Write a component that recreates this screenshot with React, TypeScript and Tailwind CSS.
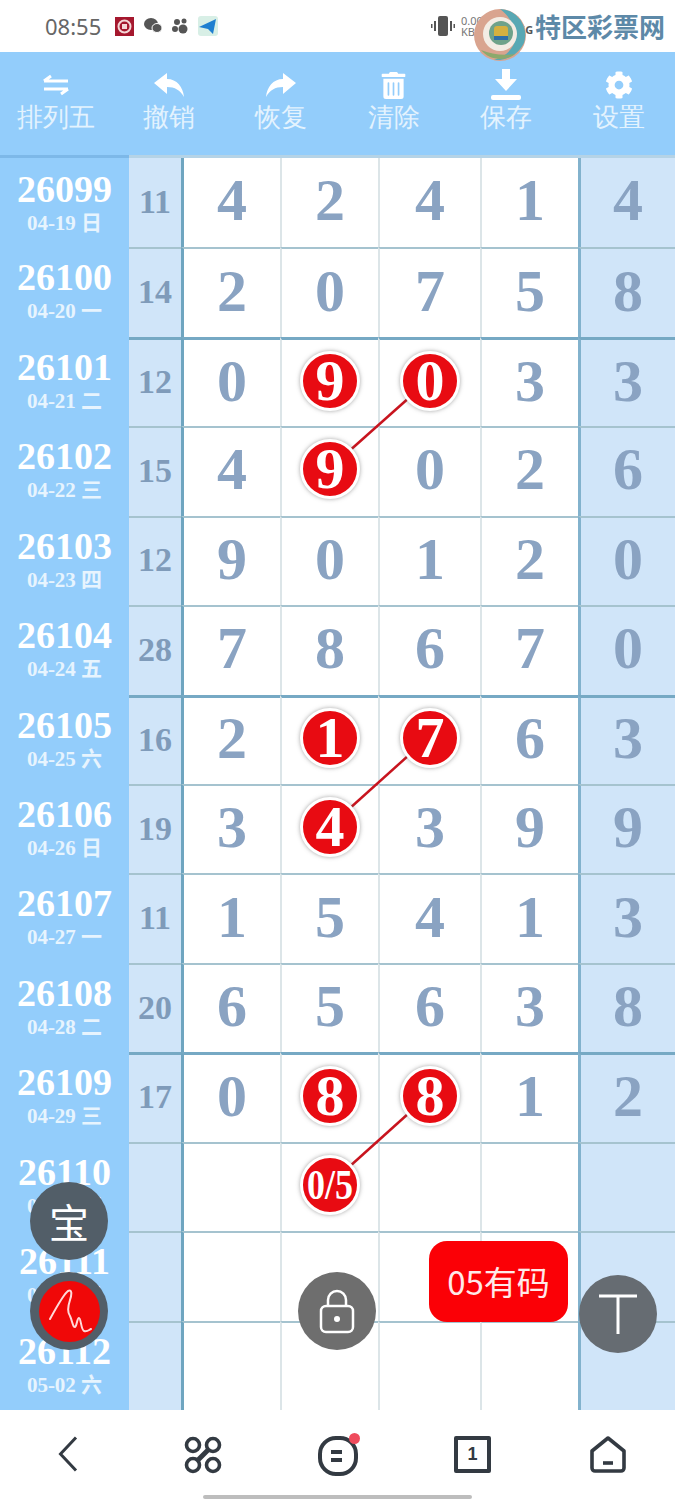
import { FaCog, FaTrashAlt } from 'react-icons/fa'

const serif = { fontFamily: '"Liberation Serif", "Noto Sans CJK SC", serif' }

type Row = { issue: string; date: string; sum: string; nums: string[]; hits?: number[] }

const rows: Row[] = [
  { issue: '26099', date: '04-19 日', sum: '11', nums: ['4', '2', '4', '1', '4'] },
  { issue: '26100', date: '04-20 一', sum: '14', nums: ['2', '0', '7', '5', '8'] },
  { issue: '26101', date: '04-21 二', sum: '12', nums: ['0', '9', '0', '3', '3'], hits: [1, 2] },
  { issue: '26102', date: '04-22 三', sum: '15', nums: ['4', '9', '0', '2', '6'], hits: [1] },
  { issue: '26103', date: '04-23 四', sum: '12', nums: ['9', '0', '1', '2', '0'] },
  { issue: '26104', date: '04-24 五', sum: '28', nums: ['7', '8', '6', '7', '0'] },
  { issue: '26105', date: '04-25 六', sum: '16', nums: ['2', '1', '7', '6', '3'], hits: [1, 2] },
  { issue: '26106', date: '04-26 日', sum: '19', nums: ['3', '4', '3', '9', '9'], hits: [1] },
  { issue: '26107', date: '04-27 一', sum: '11', nums: ['1', '5', '4', '1', '3'] },
  { issue: '26108', date: '04-28 二', sum: '20', nums: ['6', '5', '6', '3', '8'] },
  { issue: '26109', date: '04-29 三', sum: '17', nums: ['0', '8', '8', '1', '2'], hits: [1, 2] },
  { issue: '26110', date: '04-30 四', sum: '', nums: ['', '0/5', '', '', ''], hits: [1] },
  { issue: '26111', date: '05-01 五', sum: '', nums: ['', '', '', '', ''] },
  { issue: '26112', date: '05-02 六', sum: '', nums: ['', '', '', '', ''] },
]

const thickRows = [2, 6, 10]

function SwapIcon() {
  return (
    <svg width="26" height="22" viewBox="0 0 26 22" fill="none" stroke="white" strokeWidth="3">
      <path d="M1 7h24M1 7l7-5" />
      <path d="M25 15H1M25 15l-7 5" />
    </svg>
  )
}

function UndoIcon() {
  return (
    <svg width="30" height="24" viewBox="0 0 30 24" fill="white">
      <path d="M0 10 13 0v6c10 0 16 8 17 18-4-7-9-10-17-10v7z" />
    </svg>
  )
}

function RedoIcon() {
  return (
    <svg width="30" height="24" viewBox="0 0 30 24" fill="white">
      <path d="M30 10 17 0v6C7 6 1 14 0 24c4-7 9-10 17-10v7z" />
    </svg>
  )
}

function SaveIcon() {
  return (
    <svg width="32" height="32" viewBox="0 0 32 32" fill="white">
      <path d="M12 0h8v10h7L16 22 5 10h7z" />
      <rect x="1" y="26" width="30" height="5" rx="2" />
    </svg>
  )
}

function ToolItem({ icon, label }: { icon: React.ReactNode; label: string }) {
  return (
    <div className="flex flex-col items-center">
      <div className="flex h-[34px] items-center justify-center">{icon}</div>
      <span className="text-[26px] leading-[28px] text-[#e4f3fe]">{label}</span>
    </div>
  )
}

function HitBall({ value }: { value: string }) {
  const small = value.length > 1
  return (
    <div
      className="relative z-10 flex h-[60px] w-[60px] items-center justify-center rounded-full border-[3px] border-white bg-[#e80b12] text-[58px] leading-none font-bold text-white shadow-[0_0_4px_rgba(90,90,90,0.55)]"
      style={serif}
    >
      {small ? <span className="inline-block scale-y-[1.2] text-[36px]">{value}</span> : value}
    </div>
  )
}

function TableRow({ row, index }: { row: Row; index: number }) {
  const thick = thickRows.includes(index)
  const topLine = thick
    ? 'border-t-[3px] border-t-[#76a9c4]'
    : index === 0
      ? ''
      : 'border-t-2 border-t-[#a5c3cf]'

  return (
    <div className="grid min-h-0 grid-cols-[129px_52px_99px_98px_102px_98px_97px]">
      <div
        className={`flex flex-col items-center bg-[#93cdfb] text-white ${
          index === 0 ? '-mt-[3px] border-t-[3px] border-t-[#7db8e8] pt-[11px]' : 'pt-[10px]'
        }`}
        style={serif}
      >
        <span className="text-[38px] leading-[40px] font-bold">{row.issue}</span>
        <span className="text-[21px] leading-[29px] font-bold text-[#e7f4fe]">{row.date}</span>
      </div>
      <div
        className={`flex items-center justify-center bg-[#d0e5f9] pb-[2px] text-[34px] leading-none font-bold text-[#7f9bba] ${topLine}`}
        style={serif}
      >
        {row.sum}
      </div>
      {row.nums.map((num, i) => {
        const hit = row.hits?.includes(i)
        const last = i === 4
        return (
          <div
            key={i}
            className={`flex items-center justify-center pb-[5px] text-[60px] leading-none font-bold text-[#8aa3c2] ${topLine} ${
              last ? 'border-l-[3px] border-l-[#82b2cd] bg-[#d0e5f9]' : 'bg-white'
            } ${i === 0 ? 'border-l-[3px] border-l-[#6fa5c0]' : ''} ${
              i > 0 && !last ? 'border-l-2 border-l-[#dce5e8]' : ''
            }`}
            style={serif}
          >
            {hit ? <HitBall value={num} /> : num}
          </div>
        )
      })}
    </div>
  )
}

function Logo() {
  return (
    <svg width="54" height="54" viewBox="0 0 54 54">
      <circle cx="27" cy="27" r="26" fill="#d9a48f" />
      <path d="M27 1a26 26 0 0 1 24 34c-6 12-18 18-30 17C34 48 44 38 42 26 40 14 34 6 27 1z" fill="#58a8b4" />
      <path d="M8 42c8 10 24 12 34 4-12 2-24 0-34-4z" fill="#8ca96c" />
      <circle cx="27" cy="26" r="17" fill="#f3ece4" />
      <circle cx="28" cy="25" r="12" fill="#6fa28a" />
      <rect x="21" y="18" width="14" height="14" rx="3" fill="#d5b040" />
      <path d="M21 28h14v4H21z" fill="#2f6fa8" />
    </svg>
  )
}

function StatusBar() {
  return (
    <div className="relative flex h-[52px] items-center bg-white pl-[45px] pr-[10px]">
      <span className="text-[22px] text-[#666]">08:55</span>
      <div className="ml-[14px] flex items-center gap-[10px]">
        <svg width="19" height="19" viewBox="0 0 19 19">
          <rect width="19" height="19" fill="#a5182e" />
          <circle cx="9.5" cy="9.5" r="6" fill="none" stroke="#f4d6d6" strokeWidth="2" />
          <rect x="7" y="7" width="5" height="5" fill="#f4d6d6" />
        </svg>
        <svg width="18" height="16" viewBox="0 0 18 16" fill="#555">
          <ellipse cx="7" cy="6" rx="7" ry="6" />
          <ellipse cx="13" cy="10" rx="5" ry="4.5" stroke="white" />
        </svg>
        <svg width="16" height="16" viewBox="0 0 16 16" fill="#555">
          <circle cx="5" cy="4" r="3" />
          <circle cx="12" cy="3" r="2.5" />
          <circle cx="3" cy="11" r="3" />
          <circle cx="11" cy="11" r="4.5" />
        </svg>
        <svg width="20" height="20" viewBox="0 0 20 20">
          <rect width="20" height="20" fill="#d8efe6" rx="3" />
          <path d="M1 11 18 3l-3 15-5-5z" fill="#1f7fd0" />
        </svg>
      </div>
      <div className="ml-auto flex items-center">
        <svg width="24" height="22" viewBox="0 0 24 22" fill="#555">
          <rect x="7" y="1" width="10" height="20" rx="2" />
          <rect x="3" y="6" width="2" height="10" />
          <rect x="19" y="6" width="2" height="10" />
          <rect x="0" y="9" width="1.5" height="4" />
          <rect x="22.5" y="9" width="1.5" height="4" />
        </svg>
        <div className="ml-[6px] flex w-[24px] flex-col text-[11px] leading-[11px] text-[#777]">
          <span>0.00</span>
          <span>KB/s</span>
        </div>
        <span className="ml-[34px] w-[16px] self-start pt-[11px] text-[11px] font-bold text-[#555]">5G</span>
        <span
          className="text-[26px] leading-[30px] font-bold text-[#5d89a8]"
          style={{ fontFamily: '"Noto Sans CJK SC", sans-serif' }}
        >
          特区彩票网
        </span>
      </div>
      <div className="absolute top-[8px] left-[473px] z-30">
        <Logo />
      </div>
    </div>
  )
}

function Toolbar() {
  return (
    <div className="grid h-[103px] grid-cols-6 items-start bg-[#93cdfb] pt-[16px]">
      <ToolItem icon={<SwapIcon />} label="排列五" />
      <ToolItem icon={<UndoIcon />} label="撤销" />
      <ToolItem icon={<RedoIcon />} label="恢复" />
      <ToolItem icon={<FaTrashAlt size={27} color="white" />} label="清除" />
      <ToolItem icon={<SaveIcon />} label="保存" />
      <ToolItem icon={<FaCog size={28} color="white" />} label="设置" />
    </div>
  )
}

function BottomNav() {
  return (
    <div className="relative grid flex-1 grid-cols-5 items-start bg-white pt-[26px] text-[#333a42]">
      <div className="flex justify-center">
        <svg width="20" height="36" viewBox="0 0 20 36" fill="none" stroke="currentColor" strokeWidth="3">
          <path d="M18 1.500 2.500 18 18 34.500" />
        </svg>
      </div>
      <div className="flex justify-center">
        <svg width="38" height="38" viewBox="0 0 38 38" fill="none" stroke="currentColor" strokeWidth="3.600">
          <circle cx="9" cy="9" r="6.500" />
          <circle cx="29" cy="9" r="6.500" />
          <circle cx="9" cy="29" r="6.500" />
          <circle cx="29" cy="29" r="6.500" />
          <path d="M13 25 25 13" strokeWidth="5" />
        </svg>
      </div>
      <div className="relative flex justify-center">
        <svg width="40" height="40" viewBox="0 0 40 40" fill="none" stroke="currentColor" strokeWidth="4">
          <rect x="2" y="2" width="36" height="36" rx="16" />
          <path d="M13 16h11M13 24h11" strokeWidth="4" />
        </svg>
        <span className="absolute top-[-3px] left-[79px] h-[11px] w-[11px] rounded-full bg-[#ef4b5c]" />
      </div>
      <div className="flex justify-center">
        <div
          className="flex h-[37px] w-[37px] items-center justify-center rounded-[2px] border-[4px] border-current text-[18px] font-bold"
          style={{ fontFamily: '"Liberation Sans", sans-serif' }}
        >
          1
        </div>
      </div>
      <div className="flex justify-center">
        <svg width="38" height="38" viewBox="0 0 38 38" fill="none" stroke="currentColor" strokeWidth="3.600" strokeLinejoin="round">
          <path d="M19 2 35 15v17a3 3 0 0 1-3 3H6a3 3 0 0 1-3-3V15z" />
          <path d="M14 27h10" />
        </svg>
      </div>
      <div className="absolute bottom-[1px] left-[203px] h-[4px] w-[269px] rounded-full bg-[#bdbdbd]" />
    </div>
  )
}

function FloatingButtons() {
  return (
    <>
      <div
        className="absolute top-[1182px] left-[30px] z-20 flex h-[78px] w-[78px] items-center justify-center rounded-full bg-[#525e68] text-[40px] text-white"
        style={{ fontFamily: '"Noto Sans CJK SC", sans-serif' }}
      >
        宝
      </div>
      <div className="absolute top-[1272px] left-[30px] z-20 flex h-[78px] w-[78px] items-center justify-center rounded-full bg-[#525e68]">
        <div className="flex h-[61px] w-[61px] items-center justify-center rounded-full bg-[#f00808]">
          <svg width="46" height="46" viewBox="0 0 46 46" fill="none" stroke="#ffd9d9" strokeWidth="2" strokeLinecap="round" strokeLinejoin="round">
            <path d="M4 31C10 20 18 6 22 3c4-2 4 3 2 9-2 6-3 12 0 16 2 4 3 12 5 11s2-9 4-9 2 12 5 13c3 1 5-1 7-2" />
          </svg>
        </div>
      </div>
      <div className="absolute top-[1272px] left-[298px] z-20 flex h-[78px] w-[78px] items-center justify-center rounded-full bg-[#6e6e6e]">
        <svg width="36" height="46" viewBox="0 0 36 46" fill="none" stroke="white" strokeWidth="2.500">
          <rect x="2" y="18" width="32" height="26" rx="5" />
          <path d="M9 18v-6a9 9 0 0 1 18 0v6" />
          <circle cx="18" cy="31" r="3" fill="white" stroke="none" />
        </svg>
      </div>
      <div
        className="absolute top-[1241px] left-[429px] z-20 flex h-[81px] w-[139px] items-center justify-center rounded-[18px] bg-[#fb0006] text-[33px] text-[#ffe9e9]"
        style={{ fontFamily: '"Noto Sans CJK SC", sans-serif' }}
      >
        05有码
      </div>
      <div className="absolute top-[1275px] left-[579px] z-20 flex h-[78px] w-[78px] items-center justify-center rounded-full bg-[#666c72]">
        <svg width="42" height="42" viewBox="0 0 42 42" fill="none" stroke="white" strokeWidth="3">
          <path d="M2 3h38M21 3v38" />
        </svg>
      </div>
    </>
  )
}

export default function App() {
  return (
    <div className="relative flex h-[1500px] w-[675px] flex-col overflow-hidden bg-white">
      <StatusBar />
      <Toolbar />
      <div className="relative grid h-[1255px] grid-rows-[repeat(14,minmax(0,1fr))] border-t-[3px] border-t-[#b5d3e6]">
        {rows.map((row, i) => (
          <TableRow key={row.issue} row={row} index={i} />
        ))}
        {/* connecting lines between hit balls */}
        <svg className="absolute top-0 left-0" width="675" height="1252" viewBox="0 0 675 1252" stroke="#c8141e" strokeWidth="2.500">
          <line x1="429" y1="222" x2="329" y2="311" />
          <line x1="429" y1="579" x2="329" y2="669" />
          <line x1="429" y1="937" x2="329" y2="1027" />
        </svg>
      </div>
      <BottomNav />
      <FloatingButtons />
    </div>
  )
}
